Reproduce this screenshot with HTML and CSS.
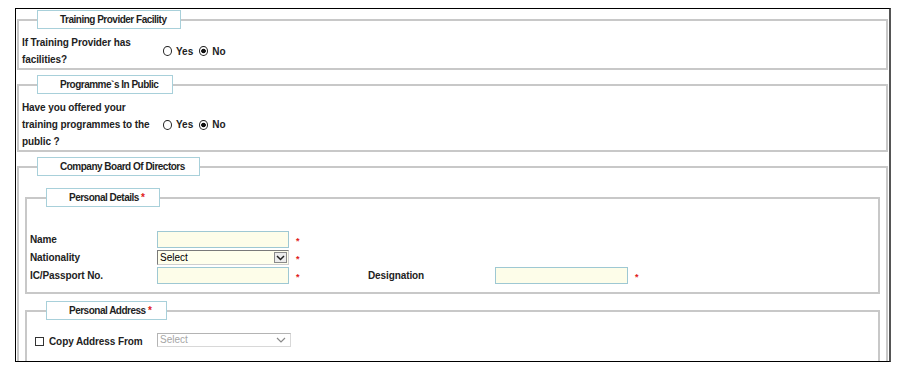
FILE: index.html
```html
<!DOCTYPE html>
<html lang="en">
<head>
    <meta charset="UTF-8">
    <title>Training Provider Registration</title>
    <link rel="stylesheet" href="styles.css">
</head>
<body>
    <div class="frame">
        <fieldset class="group">
            <legend>Training Provider Facility</legend>
            <div class="question">
                <div class="q-label">If Training Provider has<br>facilities?</div>
                <div class="choices">
                    <span class="radio"></span><span class="choice-text">Yes</span>
                    <span class="radio checked"></span><span class="choice-text">No</span>
                </div>
            </div>
        </fieldset>

        <fieldset class="group">
            <legend>Programme`s In Public</legend>
            <div class="question">
                <div class="q-label">Have you offered your<br>training programmes to the<br>public ?</div>
                <div class="choices">
                    <span class="radio"></span><span class="choice-text">Yes</span>
                    <span class="radio checked"></span><span class="choice-text">No</span>
                </div>
            </div>
        </fieldset>

        <fieldset class="group">
            <legend>Company Board Of Directors</legend>

            <fieldset class="group sub details">
                <legend>Personal Details <span class="req-mark">*</span></legend>
                <div class="form-grid">
                    <label class="field-label">Name</label>
                    <div class="field"><input type="text" class="text-input"><span class="req">*</span></div>
                    <div></div>
                    <div></div>

                    <label class="field-label">Nationality</label>
                    <div class="field">
                        <div class="select">
                            <span class="select-value">Select</span>
                            <span class="select-arrow">
                                <svg width="9" height="6" viewBox="0 0 9 6"><path d="M1 1l3.5 3.5L8 1" fill="none" stroke="#222" stroke-width="1.5"/></svg>
                            </span>
                        </div>
                        <span class="req">*</span>
                    </div>
                    <div></div>
                    <div></div>

                    <label class="field-label">IC/Passport No.</label>
                    <div class="field"><input type="text" class="text-input"><span class="req">*</span></div>
                    <label class="field-label">Designation</label>
                    <div class="field"><input type="text" class="text-input wide"><span class="req">*</span></div>
                </div>
            </fieldset>

            <fieldset class="group sub address">
                <legend>Personal Address <span class="req-mark">*</span></legend>
                <div class="copy-row">
                    <div class="copy-label"><span class="checkbox"></span>Copy Address From</div>
                    <div class="select disabled">
                        <span class="select-value">Select</span>
                        <span class="select-arrow">
                            <svg width="10" height="6" viewBox="0 0 10 6"><path d="M1 1l4 4 4-4" fill="none" stroke="#8a8a8a" stroke-width="1.2"/></svg>
                        </span>
                    </div>
                </div>
                <div class="spacer"></div>
            </fieldset>
        </fieldset>
    </div>
</body>
</html>
```

FILE: styles.css
```css
* {
    box-sizing: border-box;
}

body {
    margin: 0;
    background-color: #fff;
    color: #222;
    font-family: "Liberation Sans", Arial, sans-serif;
    font-size: 10px;
}

.frame {
    width: 876px;
    height: 354px;
    margin: 8px 0 0 15px;
    padding: 1px 1px 0 1px;
    border: 1px solid #000;
    border-right: 2px solid #555;
    overflow: hidden;
}

.group {
    margin: 0 0 5px;
    padding: 5px 3px 0;
    border: 2px solid #c8c8c8;
    min-width: 0;
}

.group legend {
    margin-left: 15px;
    padding: 0 14px 0 22px;
    border: 1px solid #a8d0da;
    background-color: #fff;
    line-height: 17px;
    font-weight: bold;
    letter-spacing: -0.5px;
    color: #1e1e1e;
}

.req-mark {
    color: #e0201a;
    letter-spacing: 0;
}

.question {
    display: flex;
    align-items: center;
}

.q-label {
    width: 141px;
    line-height: 17px;
    font-weight: bold;
    letter-spacing: -0.1px;
    white-space: nowrap;
}

.choices {
    display: flex;
    align-items: center;
    font-weight: bold;
}

.radio {
    width: 9px;
    height: 10px;
    border: 1.3px solid #222;
    border-radius: 50%;
    margin-right: 4px;
}

.radio.checked {
    background: radial-gradient(circle, #111 0 2px, transparent 2.6px);
}

.choice-text {
    margin-right: 6px;
}

.sub {
    margin: 7px 3px 0;
    padding-left: 3px;
}

.sub legend {
    margin-left: 16px;
}

.details {
    padding-top: 24px;
    padding-bottom: 8px;
}

.form-grid {
    display: grid;
    grid-template-columns: 127px 211px 127px auto;
    row-gap: 2px;
    align-items: center;
}

.field-label {
    font-weight: bold;
    letter-spacing: -0.1px;
}

.field {
    display: flex;
    align-items: center;
}

.text-input {
    width: 132px;
    height: 17px;
    margin: 0;
    padding: 0 2px;
    border: 1px solid #9ec8d3;
    background-color: #fdfde9;
    font-family: inherit;
    font-size: 10px;
}

.text-input.wide {
    width: 133px;
}

.req {
    margin-left: 7px;
    color: #e0201a;
    font-size: 9px;
    font-weight: bold;
    line-height: 9px;
    padding-top: 3px;
}

.select {
    position: relative;
    width: 132px;
    height: 15px;
    padding-left: 2px;
    border: 1px solid #7a7a7a;
    border-right-color: #cfcfcf;
    border-bottom-color: #cfcfcf;
    background-color: #ffffec;
    color: #000;
    line-height: 13px;
}

.select-arrow {
    position: absolute;
    top: 1px;
    right: 1px;
    bottom: 1px;
    width: 13px;
    display: flex;
    align-items: center;
    justify-content: center;
    border: 1px solid #8a8a8a;
    background-color: #ececec;
}

.select.disabled {
    width: 134px;
    height: 14px;
    border: 1px solid #b4b4b4;
    border-right-color: #d8d8d8;
    border-bottom-color: #d8d8d8;
    background-color: #fff;
    color: #a6a6a6;
    line-height: 12px;
}

.select.disabled .select-arrow {
    width: 16px;
    border: none;
    background: none;
}

.address {
    padding-top: 12px;
}

.copy-row {
    display: flex;
    align-items: center;
}

.copy-label {
    width: 127px;
    display: flex;
    align-items: center;
    padding-top: 4px;
    font-weight: bold;
    letter-spacing: -0.1px;
}

.checkbox {
    width: 9px;
    height: 9px;
    margin: 0 5px 0 5px;
    border: 1px solid #333;
}

.spacer {
    height: 30px;
}
```
